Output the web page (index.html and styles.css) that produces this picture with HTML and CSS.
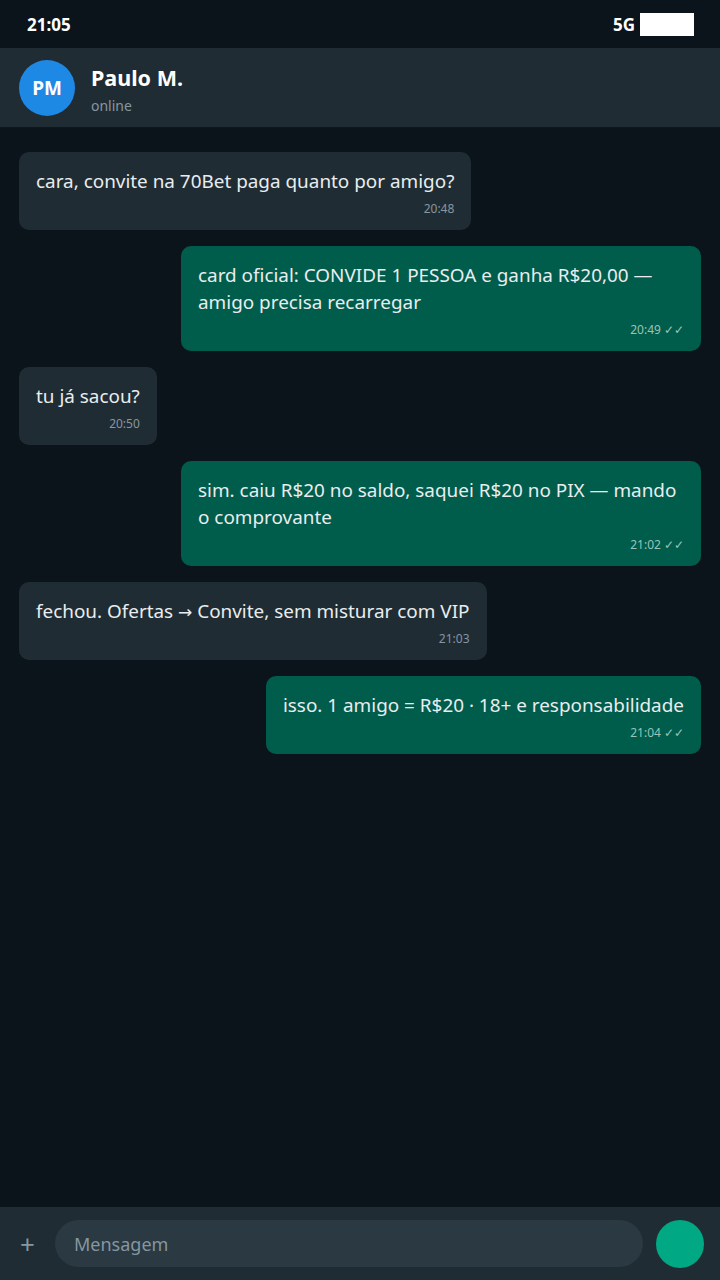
FILE: index.html
```html
<!DOCTYPE html>
<html lang="pt-BR">
<head>
    <meta charset="UTF-8">
    <meta name="viewport" content="width=device-width, initial-scale=1.0">
    <title>Paulo M.</title>
    <link rel="stylesheet" href="styles.css">
</head>
<body>
    <div class="phone">
        <div class="status-bar">
            <span class="clock">21:05</span>
            <div class="signal">
                <span>5G</span>
                <span class="battery"></span>
            </div>
        </div>

        <div class="chat-header">
            <div class="avatar">PM</div>
            <div class="contact">
                <div class="contact-name">Paulo M.</div>
                <div class="contact-status">online</div>
            </div>
        </div>

        <div class="messages">
            <div class="msg in">
                <div class="msg-text">cara, convite na 70Bet paga quanto por amigo?</div>
                <div class="msg-time">20:48</div>
            </div>
            <div class="msg out">
                <div class="msg-text">card oficial: CONVIDE 1 PESSOA e ganha R$20,00 — amigo precisa recarregar</div>
                <div class="msg-time">20:49 ✓✓</div>
            </div>
            <div class="msg in">
                <div class="msg-text">tu já sacou?</div>
                <div class="msg-time">20:50</div>
            </div>
            <div class="msg out">
                <div class="msg-text">sim. caiu R$20 no saldo, saquei R$20 no PIX — mando o comprovante</div>
                <div class="msg-time">21:02 ✓✓</div>
            </div>
            <div class="msg in">
                <div class="msg-text">fechou. Ofertas <span class="arrow">→</span> Convite, sem misturar com VIP</div>
                <div class="msg-time">21:03</div>
            </div>
            <div class="msg out">
                <div class="msg-text">isso. 1 amigo = R$20 · 18+ e responsabilidade</div>
                <div class="msg-time">21:04 ✓✓</div>
            </div>
        </div>

        <div class="composer">
            <span class="plus">+</span>
            <div class="input">Mensagem</div>
            <div class="send"></div>
        </div>
    </div>
</body>
</html>
```

FILE: styles.css
```css
body {
    margin: 0;
    padding: 0;
    background-color: #0b141a;
    font-family: "Noto Sans", "Open Sans", sans-serif;
    color: #e9edef;
}

.phone {
    height: 1280px;
    display: flex;
    flex-direction: column;
}

.status-bar {
    height: 48px;
    padding: 0 26px 0 27px;
    display: flex;
    justify-content: space-between;
    align-items: center;
    font-weight: bold;
    font-size: 17px;
    color: #fff;
}

.signal {
    display: flex;
    align-items: center;
    gap: 5px;
}

.battery {
    width: 54px;
    height: 23px;
    background-color: #fff;
}

.chat-header {
    height: 79px;
    background-color: #202c33;
    display: flex;
    align-items: center;
    padding-left: 19px;
    gap: 16px;
    border-bottom: 1px solid #0e171d;
}

.avatar {
    width: 56px;
    height: 56px;
    border-radius: 50%;
    background-color: #1e88e5;
    color: #fff;
    font-weight: bold;
    font-size: 19px;
    display: flex;
    align-items: center;
    justify-content: center;
}

.contact {
    padding-top: 4px;
}

.contact-name {
    font-weight: bold;
    font-size: 21.5px;
    color: #fff;
    line-height: 26px;
}

.contact-status {
    font-size: 14px;
    color: #8696a0;
    margin-top: 5px;
}

.messages {
    flex: 1;
    padding: 24px 19px;
    display: flex;
    flex-direction: column;
    gap: 16px;
}

.msg {
    max-width: 486px;
    padding: 16px 17px 13px 17px;
    border-radius: 10px;
}

.msg.in {
    align-self: flex-start;
    background-color: #202c33;
}

.msg.out {
    align-self: flex-end;
    background-color: #005c4b;
}

.msg-text {
    font-size: 18.9px;
    line-height: 27px;
}

.arrow {
    font-family: "DejaVu Sans", sans-serif;
    font-size: 17px;
    line-height: 0;
}

.msg-time {
    font-size: 12px;
    line-height: 16px;
    margin-top: 6px;
    text-align: right;
    color: #8696a0;
}

.msg.out .msg-time {
    color: #9ac3b8;
}

.composer {
    height: 73px;
    background-color: #202c33;
    display: flex;
    align-items: center;
    padding: 0 16px 0 20px;
}

.plus {
    color: #8696a0;
    font-size: 26px;
    width: 35px;
}

.input {
    flex: 1;
    height: 47px;
    border-radius: 24px;
    background-color: #2a3942;
    color: #8696a0;
    font-size: 18px;
    display: flex;
    align-items: center;
    padding-left: 19px;
    margin-right: 13px;
}

.send {
    width: 48px;
    height: 48px;
    border-radius: 50%;
    background-color: #00a884;
}
```
